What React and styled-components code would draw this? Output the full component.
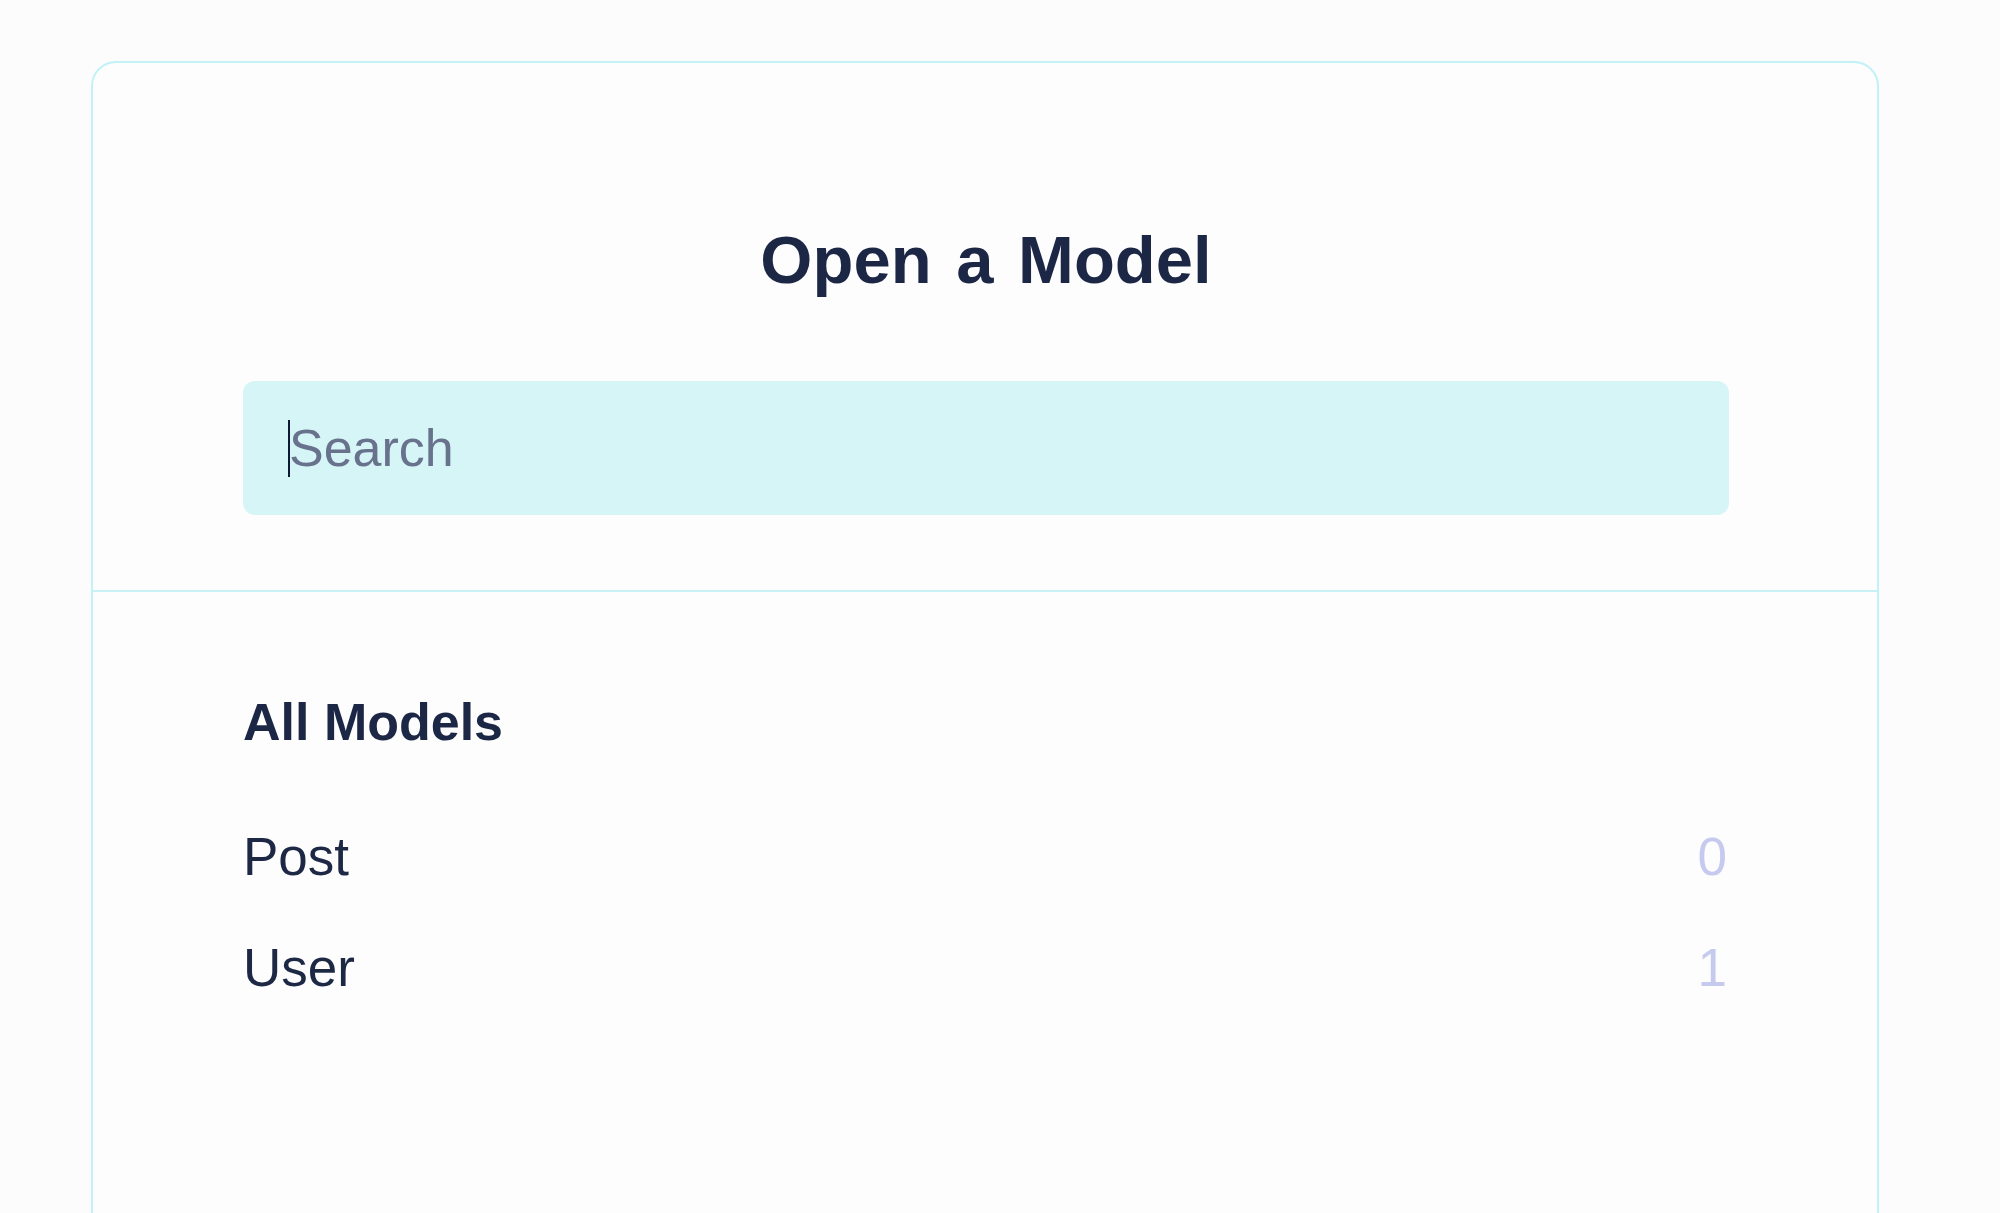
import React from 'react';
import styled, { createGlobalStyle } from 'styled-components';

const GlobalStyle = createGlobalStyle`
  html,
  body {
    margin: 0;
    padding: 0;
    background: #fcfcfd;
    overflow: hidden;
  }
  body {
    font-family: 'Liberation Sans', Arial, sans-serif;
    color: #1d2845;
  }
`;

const Page = styled.div`
  padding: 61px 0 0 91px;
  height: 1213px;
  box-sizing: border-box;
`;

const Card = styled.div`
  width: 1788px;
  min-height: 1300px;
  box-sizing: border-box;
  border: 2px solid #c2f1f6;
  border-radius: 25px;
  background: #fdfdfe;
`;

const Header = styled.div`
  padding: 159px 148px 75px 150px;
  border-bottom: 2px solid #c6f1f5;
  display: flex;
  flex-direction: column;
`;

const Title = styled.h1`
  margin: 0 0 83px;
  font-size: 67px;
  line-height: 76px;
  font-weight: 700;
  text-align: center;
  word-spacing: 6px;
  color: #1c2746;
`;

const SearchField = styled.div`
  position: relative;
`;

const SearchInput = styled.input`
  display: block;
  width: 100%;
  height: 134px;
  box-sizing: border-box;
  margin: 0;
  padding: 0 46px;
  border: none;
  outline: none;
  border-radius: 12px;
  background: #d5f5f7;
  font-family: 'Liberation Sans', Arial, sans-serif;
  font-size: 52px;
  color: #1d2845;
  caret-color: #0e1a33;

  &::placeholder {
    color: #68728c;
    opacity: 1;
  }
`;

const Caret = styled.span`
  position: absolute;
  left: 45px;
  top: 39px;
  width: 2px;
  height: 57px;
  background: #0e1a33;
  pointer-events: none;
`;

const Body = styled.div`
  padding: 100px 150px 0 150px;
  display: flex;
  flex-direction: column;
`;

const SectionTitle = styled.h2`
  margin: 0 0 74px;
  font-size: 52px;
  line-height: 60px;
  font-weight: 700;
  color: #1c2746;
`;

const List = styled.ul`
  list-style: none;
  margin: 0;
  padding: 0;
  display: flex;
  flex-direction: column;
  gap: 50px;
`;

const Row = styled.li`
  display: flex;
  justify-content: space-between;
  align-items: center;
  font-size: 53px;
  line-height: 61px;
  color: #1d2845;
`;

const Count = styled.span`
  color: #c6caef;
`;

const models = [
  { name: 'Post', count: 0 },
  { name: 'User', count: 1 },
];

export default function App() {
  return (
    <>
      <GlobalStyle />
      <Page>
        <Card>
          <Header>
            <Title>Open a Model</Title>
            <SearchField>
              <SearchInput placeholder="Search" />
              <Caret />
            </SearchField>
          </Header>
          <Body>
            <SectionTitle>All Models</SectionTitle>
            <List>
              {models.map((m) => (
                <Row key={m.name}>
                  <span>{m.name}</span>
                  <Count>{m.count}</Count>
                </Row>
              ))}
            </List>
          </Body>
        </Card>
      </Page>
    </>
  );
}
